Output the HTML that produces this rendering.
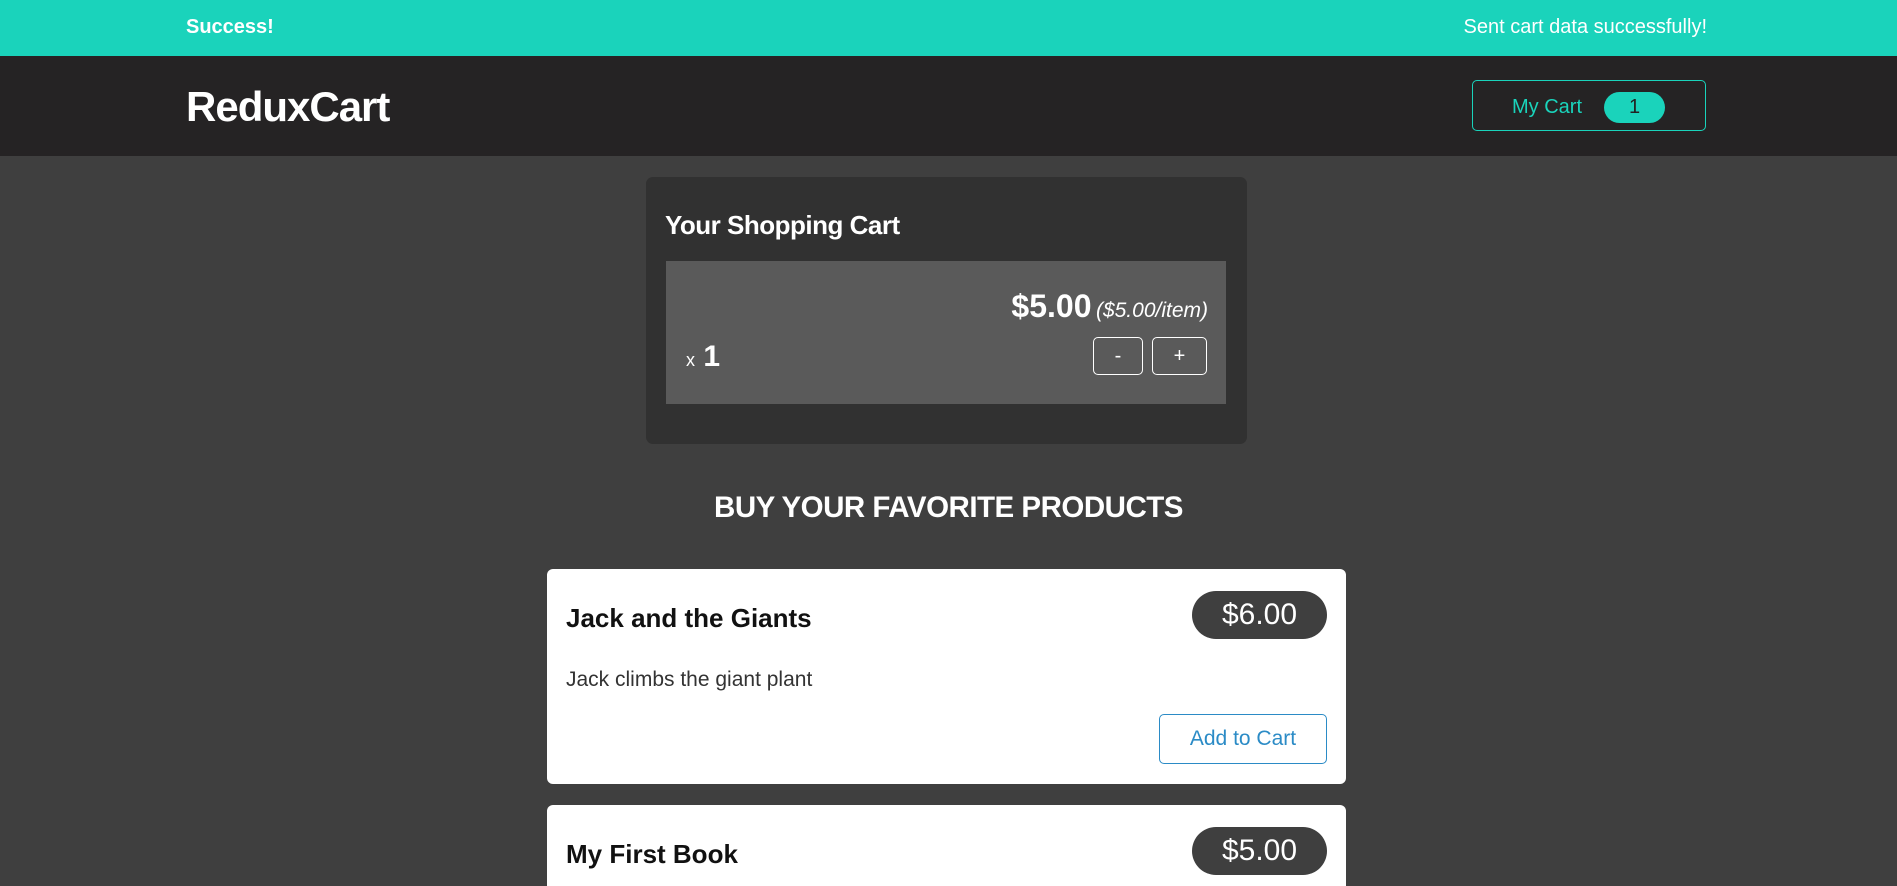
<!DOCTYPE html>
<html style="width:1897px;height:886px;overflow:hidden"><head><style>
*{margin:0;padding:0;box-sizing:border-box}
body{width:1897px;height:886px;overflow:hidden;background:#3f3f3f;font-family:"Liberation Sans",sans-serif;position:relative}
.ab{position:absolute}
</style></head><body>
<div class="ab" style="left:0;top:0;width:1897px;height:56px;background:#1ad3bb"></div>
<div class="ab" style="left:186px;top:16px;font-size:20px;font-weight:bold;color:#fff">Success!</div>
<div class="ab" style="right:190px;top:16px;font-size:20px;color:#fff">Sent cart data successfully!</div>
<div class="ab" style="left:0;top:56px;width:1897px;height:100px;background:#252324"></div>
<div class="ab" style="left:186px;top:83px;font-size:42px;font-weight:bold;color:#fff;letter-spacing:-1px">ReduxCart</div>
<div class="ab" style="left:1472px;top:80px;width:234px;height:51px;border:1px solid #1ad3bb;border-radius:5px"></div>
<div class="ab" style="left:1512px;top:96px;font-size:20px;color:#1ad3bb">My Cart</div>
<div class="ab" style="left:1604px;top:92px;width:61px;height:31px;border-radius:16px;background:#1ad3bb;color:#222;font-size:20px;text-align:center;line-height:31px">1</div>

<div class="ab" style="left:646px;top:177px;width:601px;height:267px;background:#313131;border-radius:7px"></div>
<div class="ab" style="left:665px;top:210px;font-size:26px;font-weight:bold;color:#fff;letter-spacing:-0.5px">Your Shopping Cart</div>
<div class="ab" style="left:666px;top:261px;width:560px;height:143px;background:#5a5a5a"></div>
<div class="ab" style="right:689px;top:288px;color:#fff;white-space:nowrap"><span style="font-size:32px;font-weight:bold">$5.00</span> <span style="font-size:21px;font-style:italic">($5.00/item)</span></div>
<div class="ab" style="left:686px;top:340px;color:#fff;white-space:nowrap"><span style="font-size:18px">x</span><span style="font-size:30px;font-weight:bold"> 1</span></div>
<div class="ab" style="left:1093px;top:337px;width:50px;height:38px;border:1px solid #fff;border-radius:5px;color:#fff;text-align:center;line-height:36px;font-size:20px">-</div>
<div class="ab" style="left:1152px;top:337px;width:55px;height:38px;border:1px solid #fff;border-radius:5px;color:#fff;text-align:center;line-height:36px;font-size:20px">+</div>

<div class="ab" style="left:0;width:1897px;top:491px;text-align:center;font-size:29.5px;font-weight:bold;color:#fff;letter-spacing:-0.5px">BUY YOUR FAVORITE PRODUCTS</div>

<div class="ab" style="left:547px;top:569px;width:799px;height:215px;background:#fff;border-radius:6px"></div>
<div class="ab" style="left:566px;top:603px;font-size:26px;font-weight:bold;color:#111">Jack and the Giants</div>
<div class="ab" style="left:1192px;top:591px;width:135px;height:48px;border-radius:24px;background:#3f3f3f;color:#fff;font-size:30px;text-align:center;line-height:48px">$6.00</div>
<div class="ab" style="left:566px;top:668px;font-size:21px;color:#333">Jack climbs the giant plant</div>
<div class="ab" style="left:1159px;top:714px;width:168px;height:50px;border:1px solid #2b8bc6;border-radius:5px;color:#2b8bc6;font-size:21px;text-align:center;line-height:48px">Add to Cart</div>

<div class="ab" style="left:547px;top:805px;width:799px;height:81px;background:#fff;border-radius:6px 6px 0 0"></div>
<div class="ab" style="left:566px;top:839px;font-size:26px;font-weight:bold;color:#111">My First Book</div>
<div class="ab" style="left:1192px;top:827px;width:135px;height:48px;border-radius:24px;background:#3f3f3f;color:#fff;font-size:30px;text-align:center;line-height:48px">$5.00</div>
</body></html>
